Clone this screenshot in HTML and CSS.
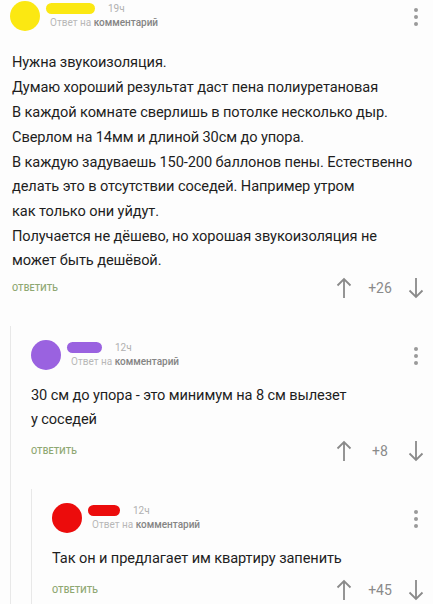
FILE: index.html
```html
<!DOCTYPE html>
<html lang="ru">
  <head>
    <meta charset="UTF-8" />
    <meta name="viewport" content="width=device-width, initial-scale=1.0" />
    <title>Комментарии</title>
    <link rel="stylesheet" href="styles.css">
  </head>
  <body>
    <div class="thread">
      <div class="comment root">
        <div class="head">
          <div class="avatar yellow"></div>
          <div class="meta">
            <div class="line1"><span class="nick yellow" style="width: 49px"></span><span class="time">19ч</span></div>
            <div class="line2">Ответ на <b>комментарий</b></div>
          </div>
          <svg class="dots" width="6" height="18" viewBox="0 0 6 18"><circle cx="3" cy="2" r="2"/><circle cx="3" cy="9" r="2"/><circle cx="3" cy="16" r="2"/></svg>
        </div>
        <div class="text">
          <p>Нужна звукоизоляция.</p>
          <p>Думаю хороший результат даст пена полиуретановая</p>
          <p>В каждой комнате сверлишь в потолке несколько дыр.</p>
          <p>Сверлом на 14мм и длиной 30см до упора.</p>
          <p>В каждую задуваешь 150-200 баллонов пены. Естественно<br>делать это в отсутствии соседей. Например утром</p>
          <p>как только они уйдут.</p>
          <p>Получается не дёшево, но хорошая звукоизоляция не<br>может быть дешёвой.</p>
        </div>
        <div class="foot">
          <span class="reply">Ответить</span>
          <div class="votes">
            <svg class="arrow" width="16" height="22" viewBox="0 0 16 22"><path d="M8 21V2M1.5 8.5L8 2l6.5 6.5"/></svg>
            <span class="score">+26</span>
            <svg class="arrow" width="16" height="22" viewBox="0 0 16 22"><path d="M8 1v19M1.5 13.5L8 20l6.5-6.5"/></svg>
          </div>
        </div>

        <div class="children">
          <div class="comment">
            <div class="head">
              <div class="avatar purple"></div>
              <div class="meta">
                <div class="line1"><span class="nick purple" style="width: 35px"></span><span class="time">12ч</span></div>
                <div class="line2">Ответ на <b>комментарий</b></div>
              </div>
              <svg class="dots" width="6" height="18" viewBox="0 0 6 18"><circle cx="3" cy="2" r="2"/><circle cx="3" cy="9" r="2"/><circle cx="3" cy="16" r="2"/></svg>
            </div>
            <div class="text">
              <p>30 см до упора - это минимум на 8 см вылезет<br>у соседей</p>
            </div>
            <div class="foot">
              <span class="reply">Ответить</span>
              <div class="votes">
                <svg class="arrow" width="16" height="22" viewBox="0 0 16 22"><path d="M8 21V2M1.5 8.5L8 2l6.5 6.5"/></svg>
                <span class="score">+8</span>
                <svg class="arrow" width="16" height="22" viewBox="0 0 16 22"><path d="M8 1v19M1.5 13.5L8 20l6.5-6.5"/></svg>
              </div>
            </div>

            <div class="children">
              <div class="comment">
                <div class="head">
                  <div class="avatar red"></div>
                  <div class="meta">
                    <div class="line1"><span class="nick red" style="width: 32px"></span><span class="time">12ч</span></div>
                    <div class="line2">Ответ на <b>комментарий</b></div>
                  </div>
                  <svg class="dots" width="6" height="18" viewBox="0 0 6 18"><circle cx="3" cy="2" r="2"/><circle cx="3" cy="9" r="2"/><circle cx="3" cy="16" r="2"/></svg>
                </div>
                <div class="text">
                  <p>Так он и предлагает им квартиру запенить</p>
                </div>
                <div class="foot">
                  <span class="reply">Ответить</span>
                  <div class="votes">
                    <svg class="arrow" width="16" height="22" viewBox="0 0 16 22"><path d="M8 21V2M1.5 8.5L8 2l6.5 6.5"/></svg>
                    <span class="score">+45</span>
                    <svg class="arrow" width="16" height="22" viewBox="0 0 16 22"><path d="M8 1v19M1.5 13.5L8 20l6.5-6.5"/></svg>
                  </div>
                </div>
                <div class="tail"></div>
              </div>
            </div>
          </div>
        </div>
      </div>
    </div>
  </body>
</html>
```

FILE: styles.css
```css
body {
  margin: 0;
  padding: 0;
  background: #fdfdfd;
  font-family: Roboto, "Noto Sans", sans-serif;
  color: #1e1e1e;
  overflow: hidden;
}
.thread {
  padding: 1px 9px 0 10px;
}
.head {
  display: flex;
  align-items: center;
  height: 30px;
}
.avatar {
  width: 30px;
  height: 30px;
  border-radius: 50%;
  flex-shrink: 0;
}
.yellow {
  background: #fbe812;
}
.purple {
  background: #9a62e0;
}
.red {
  background: #ec0c0c;
}
.meta {
  margin-left: 10px;
  flex: 1;
  display: flex;
  flex-direction: column;
  gap: 2px;
  margin-top: -1px;
}
.line1 {
  display: flex;
  align-items: center;
  height: 12px;
}
.nick {
  display: inline-block;
  height: 11px;
  border-radius: 6px;
  margin-left: -4px;
}
.time {
  margin-left: 13px;
  font-size: 10px;
  color: #b0b0b0;
}
.line2 {
  font-size: 10px;
  color: #b8b8b8;
  line-height: 12px;
}
.line2 b {
  color: #858585;
  font-weight: 500;
}
.dots {
  fill: #9a9a9a;
  margin-right: 5px;
  margin-top: 1px;
}
.text {
  margin-top: 13px;
  margin-right: -9px;
  font-size: 14.6px;
  letter-spacing: -0.1px;
  line-height: 24px;
  white-space: nowrap;
}
.root > .text {
  margin-top: 19px;
  margin-left: 2px;
}
.text p {
  margin: 0 0 1px 0;
}
.foot {
  display: flex;
  align-items: center;
  justify-content: space-between;
  height: 24px;
  margin-top: 8px;
}
.root > .foot {
  margin-top: 4px;
}
.reply {
  text-transform: uppercase;
  font-size: 9px;
  font-weight: 500;
  color: #8fa872;
  letter-spacing: 0.1px;
}
.root > .foot .reply {
  margin-left: 2px;
}
.votes {
  display: flex;
  align-items: center;
}
.arrow {
  fill: none;
  stroke: #8a8a8a;
  stroke-width: 1.8;
}
.score {
  width: 48px;
  margin: 0 4px;
  text-align: center;
  font-size: 14px;
  color: #8a8a8a;
}
.children {
  margin-top: 26px;
  padding-top: 14px;
  padding-left: 20px;
  border-left: 1px solid #e8e8e8;
}
.tail {
  height: 40px;
}
```
